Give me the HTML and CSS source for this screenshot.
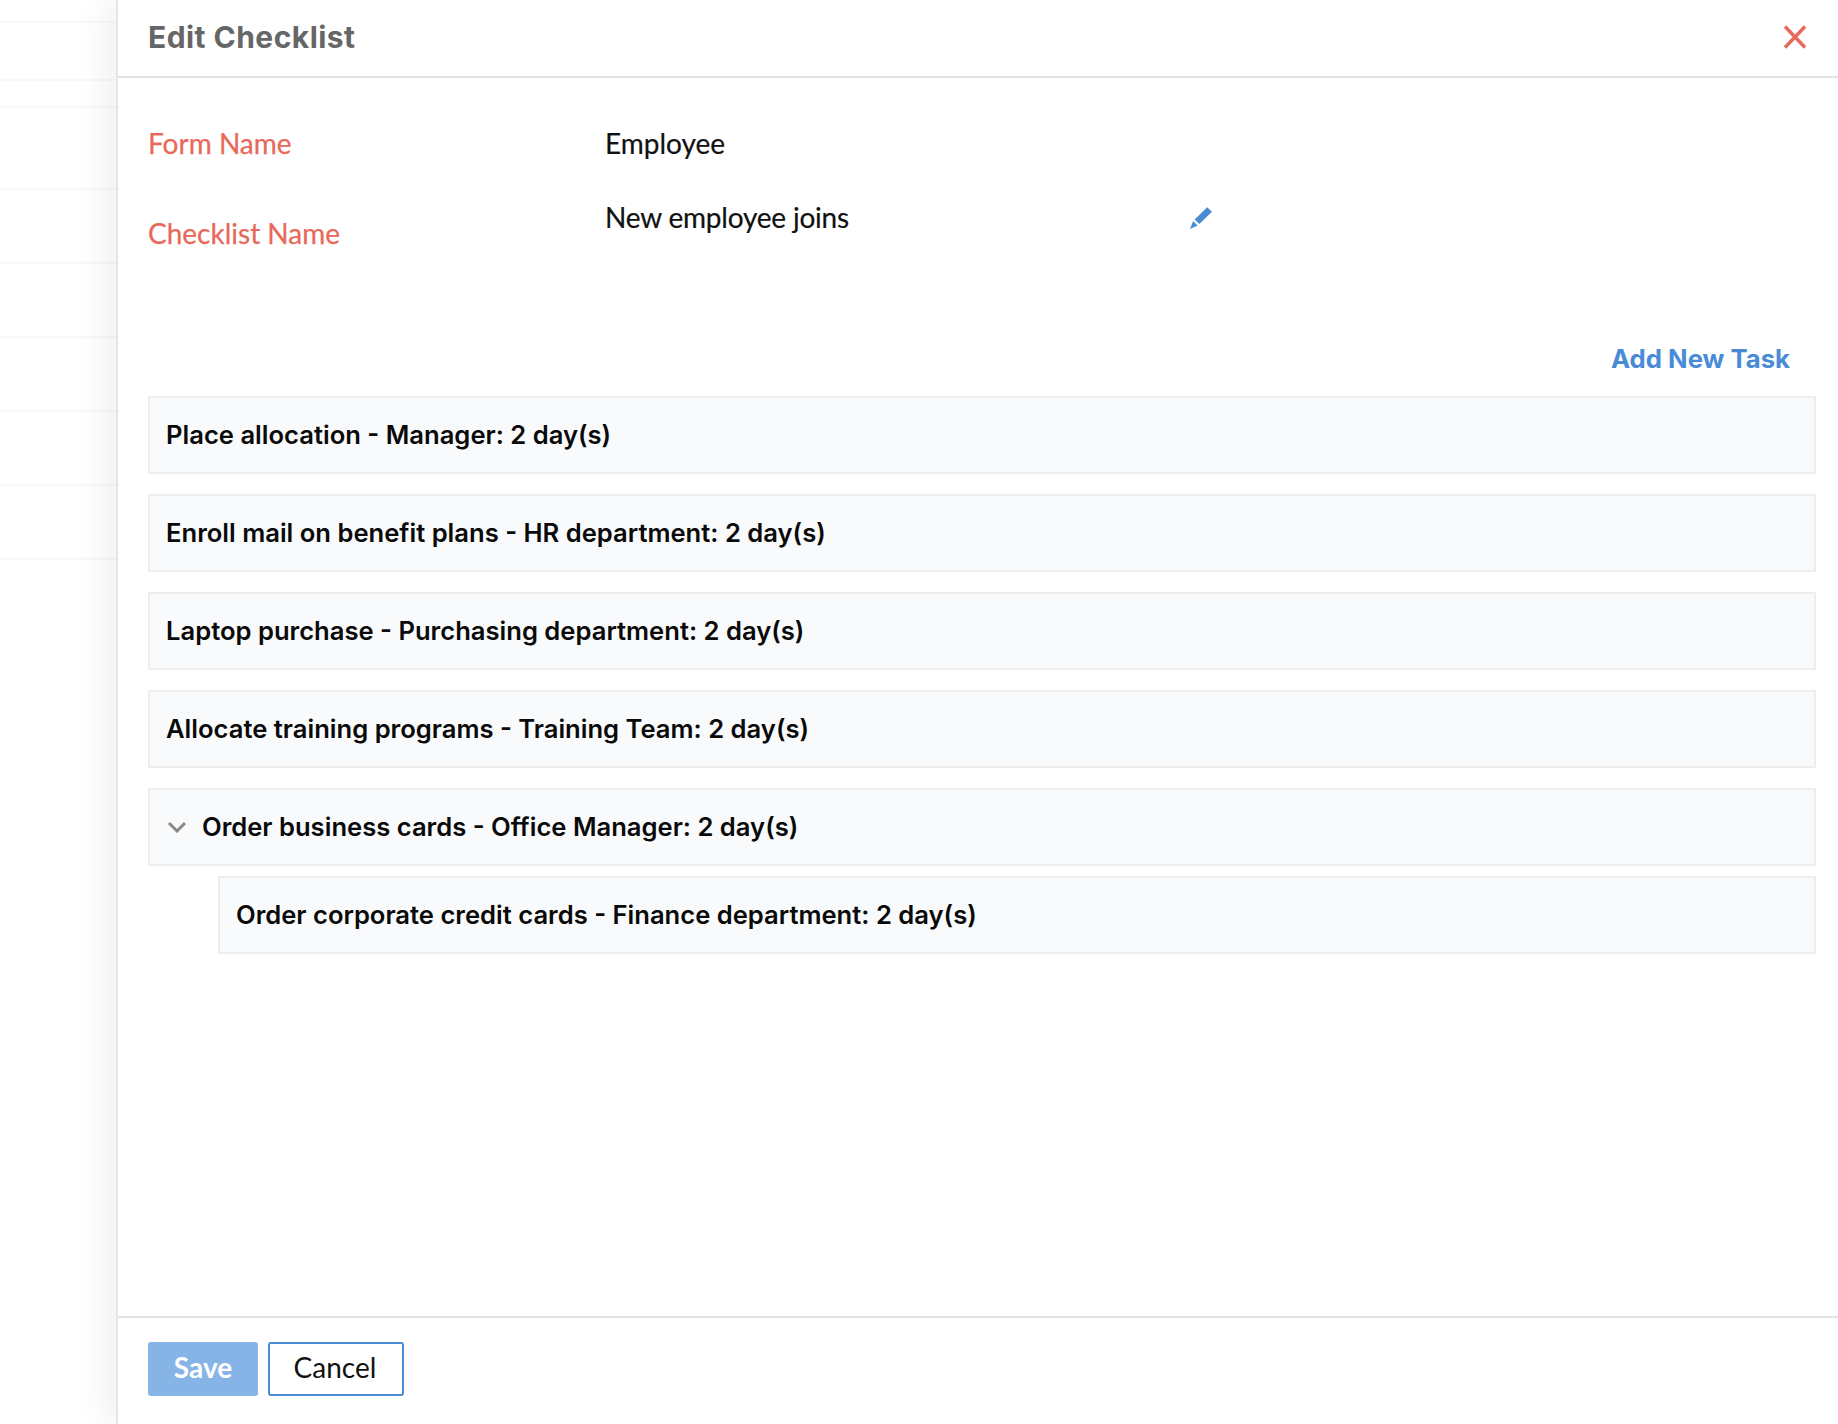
FILE: index.html
```html
<!DOCTYPE html>
<html lang="en">
<head>
<meta charset="utf-8">
<title>Edit Checklist</title>
<link rel="stylesheet" href="styles.css">
</head>
<body>
<div class="page">
  <aside class="backdrop">
    <div class="bd-row h22"></div>
    <div class="bd-row h58"></div>
    <div class="bd-row h27"></div>
    <div class="bd-row h82"></div>
    <div class="bd-row h74"></div>
    <div class="bd-row h74"></div>
    <div class="bd-row h74"></div>
    <div class="bd-row h74"></div>
    <div class="bd-row h74"></div>
  </aside>
  <main class="panel">
    <header class="head">
      <h1 class="title">Edit Checklist</h1>
      <button class="close" aria-label="Close">
        <svg width="24" height="24" viewBox="0 0 24 24"><path d="M2 1.5 L22 22.5 M22 1.5 L2 22.5" stroke="#e8685a" stroke-width="3.4" fill="none"/></svg>
      </button>
    </header>
    <section class="content">
      <div class="field first">
        <div class="label">Form Name</div>
        <div class="value">Employee</div>
      </div>
      <div class="field second">
        <div class="label low">Checklist Name</div>
        <div class="value fixed">New employee joins</div>
        <svg class="pencil" width="24" height="24" viewBox="0 0 24 24"><path d="M18.2 1.2 L23 5.8 L10.4 18 L5.6 13.4 Z M4.2 15 L8.6 19.4 L1 23 Z" fill="#4a8bd8"/></svg>
      </div>
      <div class="actions"><a class="add">Add New Task</a></div>
      <div class="tasks">
        <div class="task">Place allocation - Manager: 2 day(s)</div>
        <div class="task">Enroll mail on benefit plans - HR department: 2 day(s)</div>
        <div class="task">Laptop purchase - Purchasing department: 2 day(s)</div>
        <div class="task">Allocate training programs - Training Team: 2 day(s)</div>
        <div class="group">
          <div class="task parent">
            <svg class="chev" width="20" height="12" viewBox="0 0 20 12"><path d="M2 2 L10 10 L18 2" stroke="#8a8a8a" stroke-width="3" fill="none"/></svg>
            <span>Order business cards - Office Manager: 2 day(s)</span>
          </div>
          <div class="task child">Order corporate credit cards - Finance department: 2 day(s)</div>
        </div>
      </div>
    </section>
    <footer class="foot">
      <button class="btn save">Save</button>
      <button class="btn cancel">Cancel</button>
    </footer>
  </main>
</div>
</body>
</html>
```
FILE: styles.css
```css
* { box-sizing: border-box; }
html, body { margin: 0; height: 100%; background: #fff; overflow: hidden; }
.page { display: flex; height: 1424px; }
.backdrop { width: 116px; flex: none; }
.bd-row { border-bottom: 2px solid #f8f8f8; }
.h22 { height: 23px; }
.h58 { height: 58px; }
.h27 { height: 27px; }
.h82 { height: 82px; }
.h74 { height: 74px; }
.panel {
  flex: 1; display: flex; flex-direction: column; min-width: 0;
  background: #fff; border-left: 2px solid #e6e6e6;
  box-shadow: -14px 0 28px rgba(0,0,0,.05);
}
.head {
  height: 78px; flex: none; display: flex; align-items: center; justify-content: space-between;
  padding: 0 31px 2px 30px; border-bottom: 2px solid #e4e4e4;
}
.title {
  margin: 0; font: 700 30px/36px Inter, sans-serif; color: #666; letter-spacing: .45px;
}
.close { background: none; border: 0; padding: 0; display: flex; }
.content { flex: 1; padding: 0 22px 0 30px; min-height: 0; }
.field { display: flex; align-items: flex-start; }
.first { margin-top: 47px; }
.second { margin-top: 38px; }
.label { width: 457px; flex: none; font: 400 28px/36px Lato, sans-serif; color: #e8685a; -webkit-text-stroke: .25px #e8685a; }
.low { padding-top: 16px; }
.value { font: 400 28px/36px Lato, sans-serif; color: #111; -webkit-text-stroke: .2px #111; }
.fixed { width: 584px; letter-spacing: -.2px; }
.pencil { margin-top: 7px; }
.actions { display: flex; justify-content: flex-end; padding-right: 26px; margin-top: 90px; margin-bottom: 19px; }
.add { font: 700 25.7px/36px Inter, sans-serif; color: #4a8bd8; }
.tasks { display: flex; flex-direction: column; gap: 20px; }
.task {
  height: 78px; display: flex; align-items: center; padding: 0 16px;
  background: #f9fafc; border: 2px solid #eeeeee;
  font: 600 25.6px/32px Inter, sans-serif; color: #0a0a0a;
}
.parent { gap: 15px; padding-left: 17px; }
.chev { flex: none; }
.child { margin: 10px 0 0 70px; }
.foot {
  flex: none; height: 108px; border-top: 2px solid #e4e4e4;
  padding: 24px 0 0 30px; display: flex; gap: 10px; align-items: flex-start;
}
.btn { height: 54px; font: 400 28px/1 Lato, sans-serif; border-radius: 3px; padding: 0 0 5px; }
.save { width: 110px; background: #86b4e6; border: 0; color: #fff; font-weight: 700; }
.cancel { width: 136px; background: #fff; border: 2px solid #4a8bd8; color: #111; padding-right: 2px; }
```
